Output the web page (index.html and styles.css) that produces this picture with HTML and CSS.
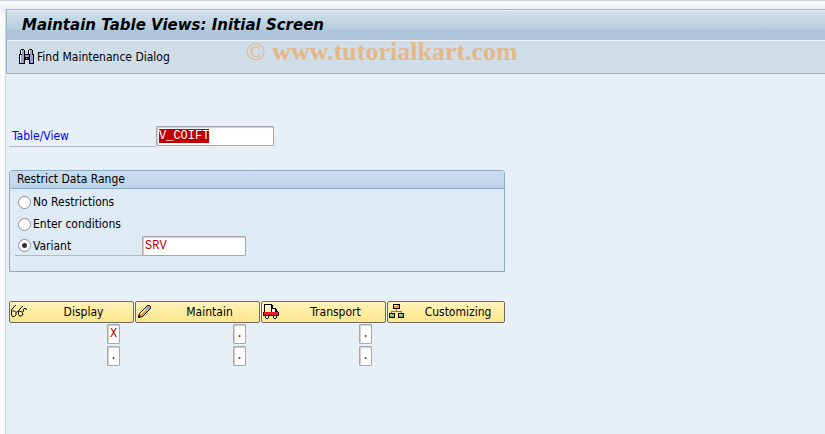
FILE: index.html
```html
<!DOCTYPE html>
<html lang="en">

<head>
    <meta charset="UTF-8">
    <meta name="viewport" content="width=device-width, initial-scale=1.0">
    <title>Maintain Table Views: Initial Screen</title>
    <link rel="stylesheet" href="styles.css">
</head>

<body>
    <div class="screen">
        <header class="header">
            <h1 class="title">Maintain Table Views: Initial Screen</h1>
            <div class="toolbar">
                <button type="button" class="tool">
                    <svg class="icon" viewBox="0 0 16 16" shape-rendering="crispEdges">
                        <path fill="#000" d="M2 0h3v1h1v4h3V1h1V0h3v1h1v4h1v10h-5v-4H6v4H0V5h1V1h1z" />
                        <path fill="#9c9cd0" d="M3 1h2v5H3zM11 1h2v5h-2zM2 6h3v8H2zM11 6h3v8h-3zM6 6h4v2H6z" />
                        <path fill="#fff" d="M2 1h1v4H2zM10 1h1v4h-1zM1 6h1v8H1zM7 9h1v1H7z" />
                    </svg>
                    <span>Find Maintenance Dialog</span>
                </button>
            </div>
            <div class="watermark"><span class="mark">©</span> www.tutorialkart.com</div>
        </header>

        <main class="content">
            <div class="field">
                <label class="field-label link" for="table">Table/View</label>
                <input class="text table-name" id="table" type="text" value="V_COIFT" spellcheck="false" autofocus>
            </div>

            <section class="group">
                <h2 class="group-title">Restrict Data Range</h2>
                <div class="group-body">
                    <div class="option">
                        <input type="radio" name="range" id="none">
                        <label for="none">No Restrictions</label>
                    </div>
                    <div class="option">
                        <input type="radio" name="range" id="conditions">
                        <label for="conditions">Enter conditions</label>
                    </div>
                    <div class="option">
                        <div class="variant">
                            <input type="radio" name="range" id="variant" checked>
                            <label for="variant">Variant</label>
                        </div>
                        <input class="text variant-name" type="text" value="SRV" aria-label="Variant name" spellcheck="false">
                    </div>
                </div>
            </section>

            <div class="actions">
                <button type="button" class="action">
                    <svg class="icon" viewBox="0 0 16 16" fill="none" stroke="#000">
                        <path d="M5 1.500H4L.5 6v5l1 1.500h2L5 11V8.500L3.500 7h-2M5 8.500l1.500-1 1 .5M12 2.500h-1L7.500 7v3.500l1 1.500h2l1.500-2-1.500-2.500h-2M12 8l1-3.500h2l.5 1.500" />
                    </svg>
                    <span>Display</span>
                </button>
                <button type="button" class="action">
                    <svg class="icon" viewBox="0 0 16 16">
                        <path fill="#f59a18" stroke="#000" d="M1.500 13.500l1-4 8-8h2l1 1v2l-8 8z" />
                        <path fill="#fff0b0" d="M3 9.500l6-6 1 1-6 6z" />
                        <path fill="#88b4e8" d="M8 4.500l2-2 2.500 2.500-2 2z" />
                        <path fill="#e88080" d="M10.500 2.500l.5-.5h1.500l.5 1v1.500l-.5.5z" />
                        <path fill="#000" d="M1 14v-3l3 2z" />
                    </svg>
                    <span>Maintain</span>
                </button>
                <button type="button" class="action">
                    <svg class="icon" viewBox="0 0 16 16" shape-rendering="crispEdges">
                        <path fill="#000" d="M1 0h8v1h1v3h3v1h1v2h1v1h1v4h-2v2h-1v1h-2v-1h-1v-1H6v1H5v1H3v-1H2v-2H0V8h1z" />
                        <path fill="#fff4b0" d="M2 1h6v7H2z" />
                        <path fill="#fff" d="M2 1h3v2H2zM9 5h3v3H9zM3 12h2v2H3zM11 12h2v2h-2z" />
                        <path fill="#e81820" d="M1 8h14v3H1z" />
                        <path fill="#fce99c" d="M6 12h4v1H6z" />
                    </svg>
                    <span>Transport</span>
                </button>
                <button type="button" class="action">
                    <svg class="icon" viewBox="0 0 16 16" shape-rendering="crispEdges">
                        <path fill="#777" d="M7 5h1v2h5v3h-1V8H3v2H2V7h5z" />
                        <path fill="#000" d="M4 0h7v5H4zM0 9h6v5H0zM9 9h6v5H9z" />
                        <path fill="#f0a020" d="M5 1h5v3H5z" />
                        <path fill="#ffe890" d="M5 1h3v1H5z" />
                        <path fill="#88b050" d="M1 10h4v3H1zM10 10h4v3h-4z" />
                        <path fill="#e0f0b0" d="M1 10h2v1H1zM10 10h2v1h-2z" />
                    </svg>
                    <span>Customizing</span>
                </button>
                <div class="flags">
                    <input class="text flag" type="text" value="X" aria-label="Display 1">
                    <input class="text flag" type="text" value="." aria-label="Display 2">
                </div>
                <div class="flags">
                    <input class="text flag" type="text" value="." aria-label="Maintain 1">
                    <input class="text flag" type="text" value="." aria-label="Maintain 2">
                </div>
                <div class="flags">
                    <input class="text flag" type="text" value="." aria-label="Transport 1">
                    <input class="text flag" type="text" value="." aria-label="Transport 2">
                </div>
            </div>
        </main>
    </div>
    <script>
        const tableEl = document.querySelector("#table");
        tableEl.focus();
        tableEl.select();
    </script>
</body>

</html>
```
FILE: styles.css
```css
* {
    box-sizing: border-box;
}

body {
    margin: 0;
    min-height: 100vh;
    display: flex;
    flex-direction: column;
    padding-left: 5px;
    border-top: 1px solid #c9d0e0;
    background: linear-gradient(#fff, #eaf0f6 8px, #f8fafc 14px);
    font-family: "DejaVu Sans Condensed", "DejaVu Sans", sans-serif;
    font-stretch: condensed;
    font-size: 12px;
    color: #000;
}

.screen {
    flex: 1;
    margin-top: 8px;
    border-left: 1px solid #ccd6e4;
    background: #e8f0f7;
}

.header {
    position: relative;
    border: 1px solid #9fb2c8;
    border-right: 0;
    background: #cfdde8;
}

.title {
    margin: 0;
    padding-left: 15px;
    border-top: 1px solid #e4eef5;
    border-bottom: 1px solid #edf3f8;
    background: linear-gradient(#d0e1ec, #b8cddd 60%, #adc4dc 70%, #adc5da);
    font: italic bold 15px/29px "DejaVu Sans", sans-serif;
}

.toolbar {
    display: flex;
    padding: 5px 12px;
}

.tool {
    display: flex;
    align-items: center;
    gap: 2px;
    height: 22px;
    padding: 0;
    border: 0;
    background: none;
    font: inherit;
}

.icon {
    flex: none;
    width: 16px;
    height: 16px;
}

.watermark {
    position: absolute;
    left: 239px;
    top: 27px;
    color: #e5b887;
    font: bold 26px/30px "Liberation Serif", serif;
    white-space: nowrap;
    pointer-events: none;
}

.mark {
    font-weight: normal;
}

.content {
    max-width: 502px;
    padding: 52px 3px 0;
}

.field {
    display: flex;
}

.field-label {
    width: 147px;
    padding-left: 3px;
    border-bottom: 1px solid #b4b8bc;
    line-height: 20px;
}

.link {
    color: #00f;
}

.text {
    height: 20px;
    padding: 0 2px;
    border: 1px solid #a5a9ad;
    border-radius: 1px;
    outline: 0;
    background: #fff;
    box-shadow: inset 1px 1px 1px #ccc;
    color: #c00000;
    font: 12px/16px "Liberation Mono", monospace;
}

.text::selection {
    background: #c00000;
    color: #fff;
}

.table-name {
    width: 118px;
}

.group {
    margin-top: 23px;
    border: 1px solid #8bacc9;
    border-radius: 3px 3px 0 0;
    background: #deeaf4;
}

.group-title {
    margin: 0;
    padding-left: 7px;
    border-bottom: 1px solid #8bacc9;
    background: linear-gradient(#cadcee, #bdd5e9);
    font-size: 12px;
    line-height: 17px;
    font-weight: normal;
}

.group-body {
    display: grid;
    gap: 2px;
    padding: 3px 5px 15px;
}

.option {
    display: flex;
    align-items: center;
    height: 20px;
    padding-left: 3px;
}

.option:last-child {
    padding-left: 0;
}

.variant {
    display: flex;
    align-items: center;
    width: 127px;
    height: 20px;
    padding-left: 3px;
    border-bottom: 1px solid #b4b8bc;
}

input[type="radio"] {
    appearance: none;
    flex: none;
    width: 13px;
    height: 13px;
    margin: 0 2px 0 0;
    border: 1px solid #8c9096;
    border-radius: 50%;
    background: #fff;
}

input[type="radio"]:checked {
    background: radial-gradient(circle, #303048 2px, #fff 3px);
}

.variant-name {
    width: 104px;
}

.actions {
    display: grid;
    grid-template-columns: 125fr 125fr 125fr 118fr;
    column-gap: 1px;
    row-gap: 1px;
    margin-top: 29px;
}

.action {
    display: flex;
    align-items: center;
    height: 22px;
    padding: 0 1px;
    border: 1px solid #6f6d62;
    border-radius: 2px;
    background: linear-gradient(#fff3bd, #ffeda0 50%, #fbe48c);
    font: inherit;
}

.action span {
    flex: 1;
    padding-left: 8px;
    text-align: center;
}

.flags {
    display: grid;
    gap: 2px;
    justify-content: end;
    padding-right: 14px;
}

.flag {
    width: 13px;
    padding: 0 2px;
}
```
